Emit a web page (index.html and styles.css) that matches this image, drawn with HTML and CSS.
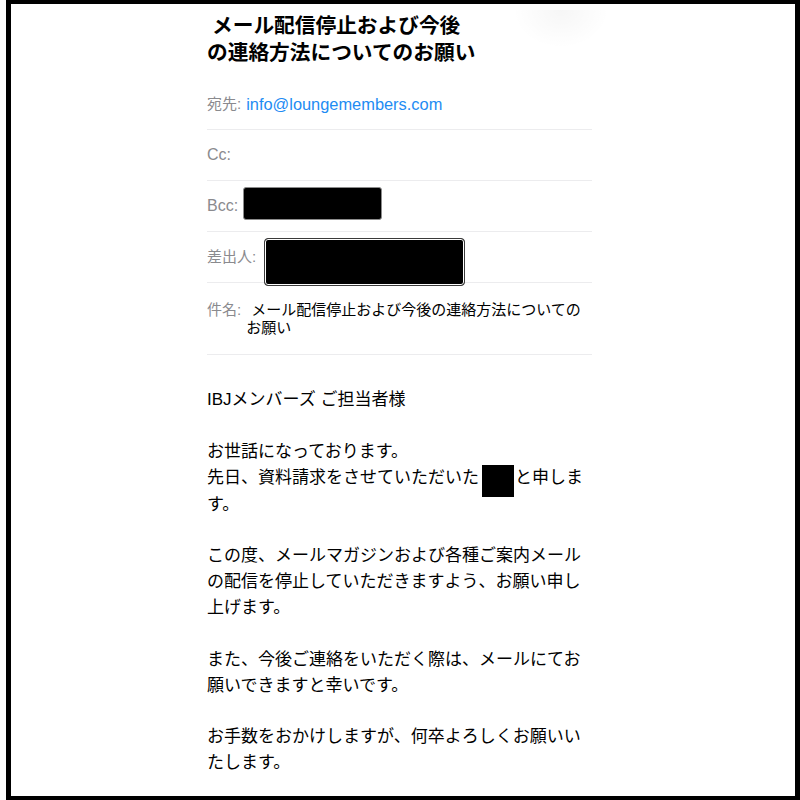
FILE: index.html
```html
<!DOCTYPE html>
<html lang="ja">
<head>
<meta charset="utf-8">
<title>メール</title>
<link rel="stylesheet" href="styles.css">
</head>
<body>
<div class="frame">
  <div class="glow"></div>
  <main class="mail">
    <h1 class="title">メール配信停止および今後<br>の連絡方法についてのお願い</h1>
    <div class="headers">
      <div class="row"><span class="label">宛先:</span><span class="link">info@loungemembers.com</span></div>
      <div class="row"><span class="label latin">Cc:</span></div>
      <div class="row"><span class="label latin">Bcc:</span><span class="redact redact-bcc"></span></div>
      <div class="row"><span class="label">差出人:</span><span class="redact redact-from"></span></div>
      <div class="row row-subject"><span class="label">件名:</span><span class="subject">メール配信停止および今後の連絡方法についてのお願い</span></div>
    </div>
    <div class="content">
      <p>IBJメンバーズ ご担当者様</p>
      <p>お世話になっております。<br>先日、資料請求をさせていただいた<span class="redact-inline"></span>と申します。</p>
      <p>この度、メールマガジンおよび各種ご案内メールの配信を停止していただきますよう、お願い申し上げます。</p>
      <p>また、今後ご連絡をいただく際は、メールにてお願いできますと幸いです。</p>
      <p>お手数をおかけしますが、何卒よろしくお願いいたします。</p>
    </div>
  </main>
</div>
</body>
</html>
```
FILE: styles.css
```css
html, body {
  margin: 0;
  padding: 0;
  background: #fff;
}

body {
  font-family: "Liberation Sans", "Noto Sans CJK JP", sans-serif;
  color: #000;
}

.frame {
  position: relative;
  margin-left: 6px;
  height: 800px;
  box-sizing: border-box;
  border: 5px solid #000;
  border-top-width: 4px;
  border-bottom-width: 4px;
  overflow: hidden;
}

.glow {
  position: absolute;
  left: 502px;
  top: 6px;
  width: 96px;
  height: 38px;
  background: radial-gradient(ellipse 50% 100% at 50% 0%, rgba(0, 0, 0, 0.035), rgba(0, 0, 0, 0) 100%);
}

.mail {
  width: 385px;
  margin-left: 196px;
  padding-top: 7.5px;
}

.title {
  margin: 0;
  font-size: 20.7px;
  line-height: 27px;
  font-weight: 700;
  text-indent: 5px;
  color: #000;
}

.headers {
  margin-top: 13px;
}

.row {
  display: flex;
  align-items: center;
  height: 51px;
  box-sizing: border-box;
  border-bottom: 1px solid #ececee;
  font-size: 15px;
  line-height: 18px;
}

.label {
  color: #8a8a8e;
  margin-right: 5px;
  white-space: nowrap;
}

.label.latin {
  font-size: 16px;
}

.link {
  color: #1e8cf3;
  font-size: 16.4px;
}

.redact {
  display: block;
  flex: none;
  box-sizing: border-box;
  background: #000;
}

.redact-bcc {
  width: 139px;
  height: 33px;
  margin-left: 0;
  margin-bottom: 5px;
  border: 1.5px solid #8c8c8c;
  border-radius: 3px;
}

.redact-from {
  width: 201px;
  height: 48px;
  margin-left: 3px;
  margin-top: 11px;
  border: 1px solid #3a3a3a;
  box-shadow: inset 0 0 0 1px #fff;
  border-radius: 4px;
}

.row-subject {
  height: auto;
  align-items: flex-start;
  padding: 18px 0 17px;
}

.subject {
  flex: 1;
  text-indent: 5px;
  color: #000;
}

.content {
  padding-top: 32.6px;
  font-size: 17px;
  line-height: 25.85px;
  color: #000;
}

.content p {
  margin: 0 0 25.85px;
}

.redact-inline {
  display: inline-block;
  width: 32px;
  height: 32px;
  margin: -5px 1px -5px 3px;
  vertical-align: -9px;
  background: #000;
}
```
